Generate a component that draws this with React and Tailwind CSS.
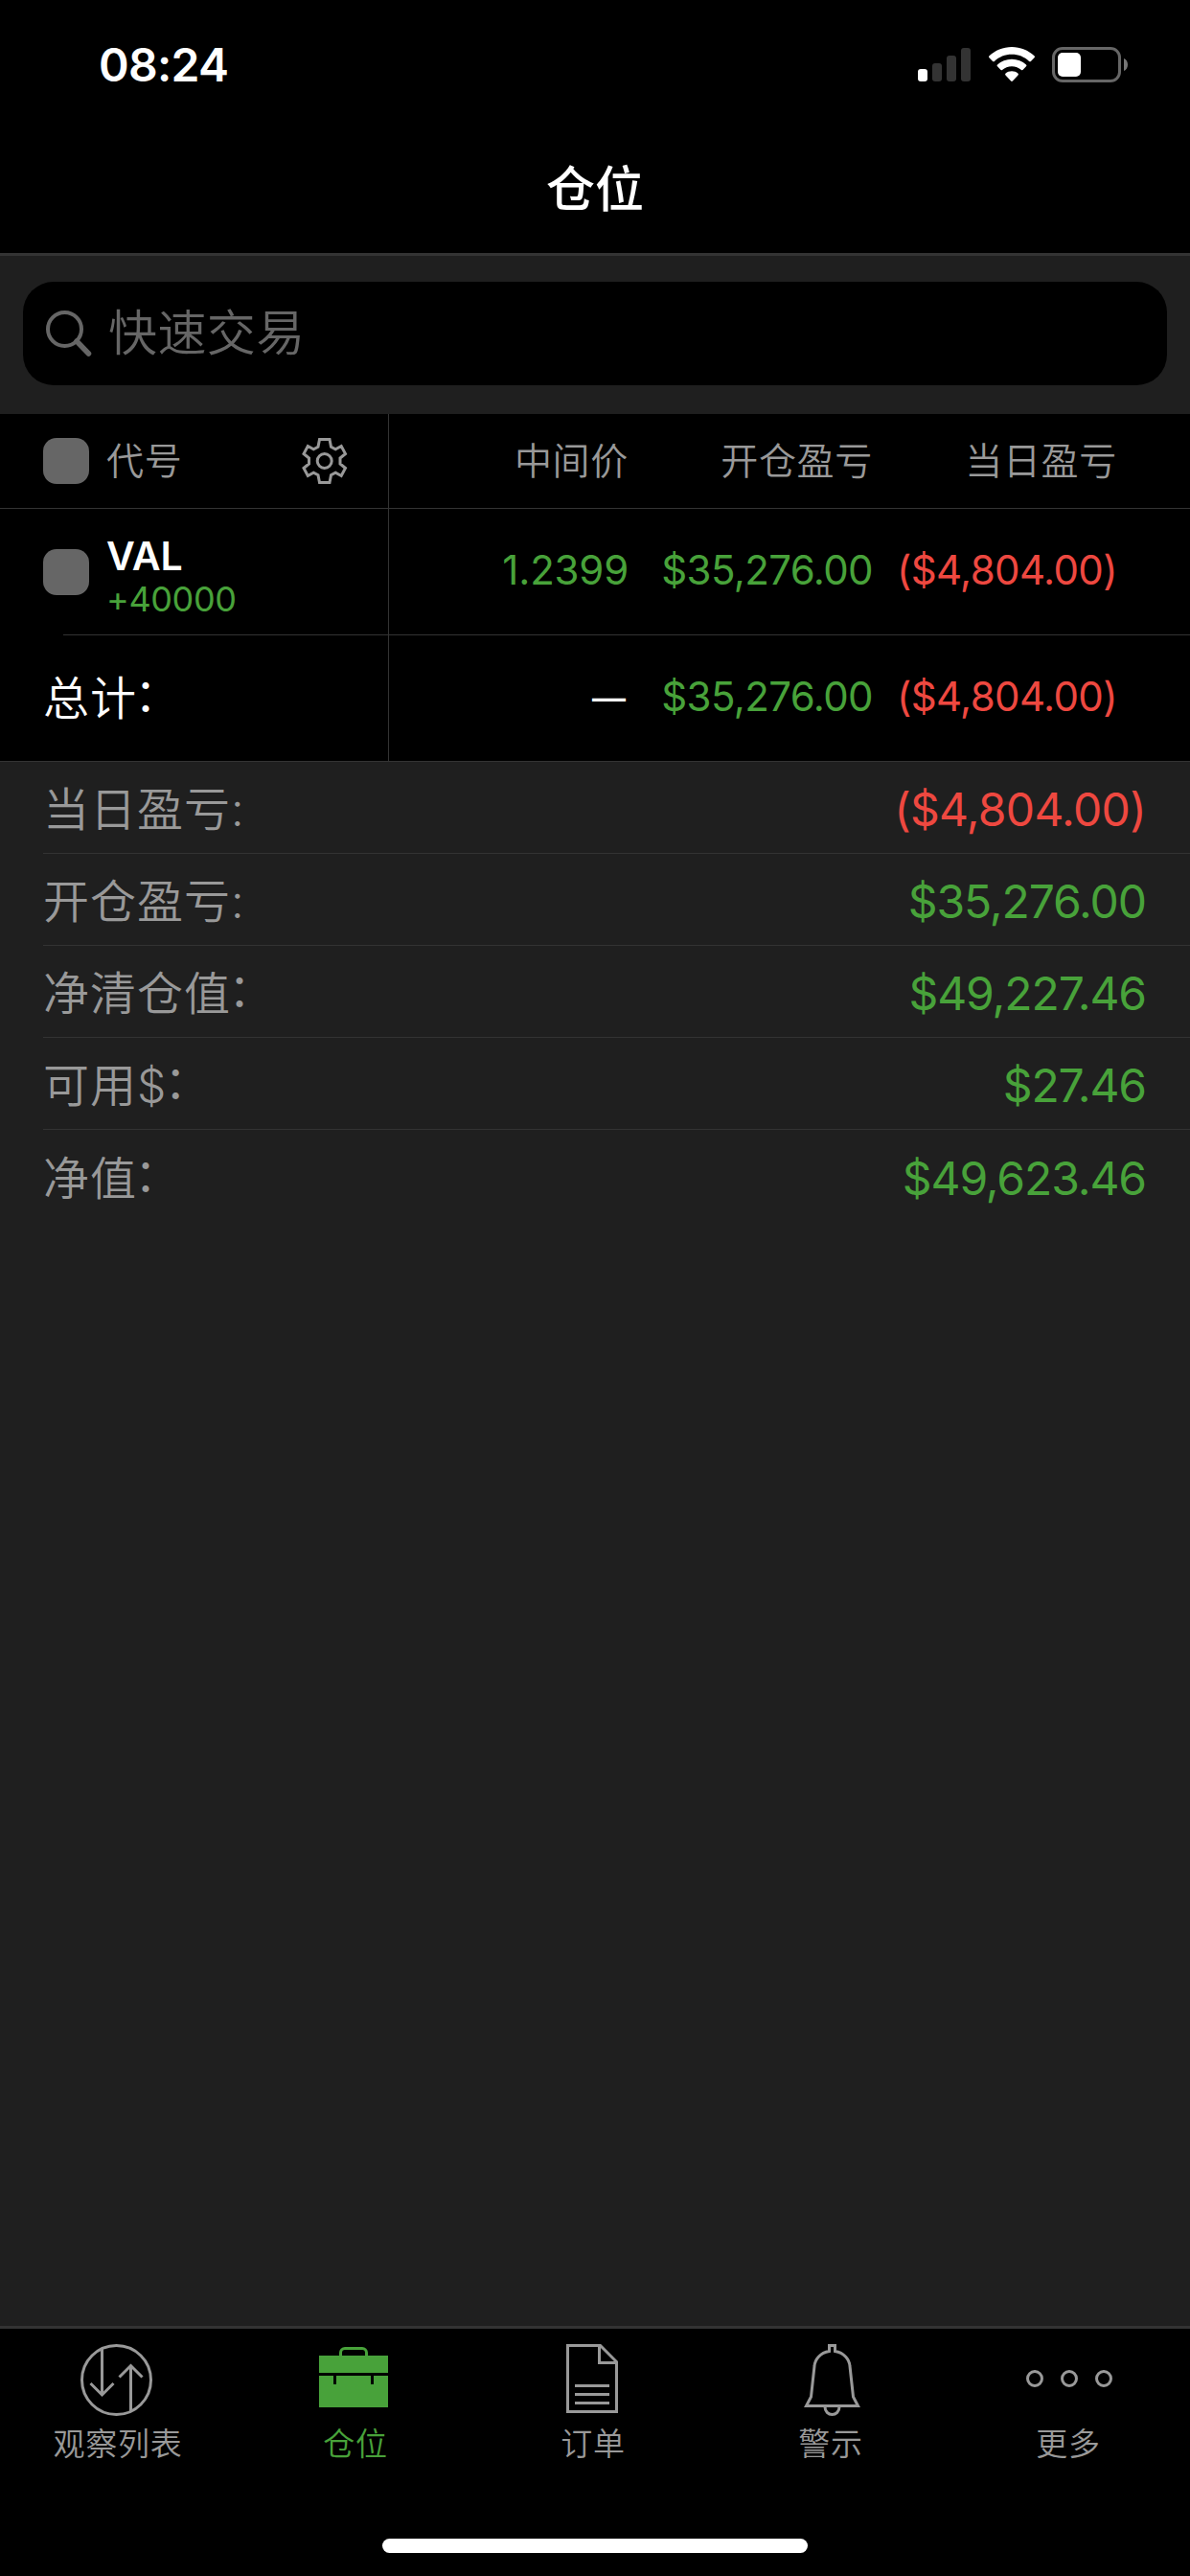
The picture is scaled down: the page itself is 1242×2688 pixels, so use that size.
import React from 'react';

const GREEN = 'text-[#48a23a]';
const RED = 'text-[#ee4840]';

const position = {
  symbol: 'VAL',
  quantity: '+40000',
  mid: '1.2399',
  openPnl: '$35,276.00',
  dayPnl: '($4,804.00)',
};

const summary = [
  { label: '当日盈亏:', value: '($4,804.00)', color: `tracking-[-0.7px] ${RED}` },
  { label: '开仓盈亏:', value: '$35,276.00', color: `tracking-[-1.1px] ${GREEN}` },
  { label: '净清仓值', wideColon: true, value: '$49,227.46', color: `tracking-[-1.1px] ${GREEN}` },
  { label: '可用$', wideColon: true, value: '$27.46', color: `tracking-[-1.1px] ${GREEN}` },
  { label: '净值', wideColon: true, value: '$49,623.46', color: `tracking-[-1.1px] ${GREEN}` },
];

const StatusBar = () => (
  <div className="h-[132px] flex justify-between pl-[103px] pr-[65px] pt-[38px] shrink-0">
    <span className="text-[48px] leading-[60px] font-semibold tracking-[-0.7px]">08:24</span>
    <div className="flex items-start pt-[11px]">
      <svg width="56" height="37" viewBox="0 0 56 37">
        <rect x="0" y="23" width="10" height="13" rx="3" fill="#fff" />
        <rect x="15" y="17" width="10" height="19" rx="3" fill="#333" />
        <rect x="30" y="9" width="10" height="27" rx="3" fill="#333" />
        <rect x="45" y="1" width="10" height="35" rx="3" fill="#333" />
      </svg>
      <svg className="ml-[18px]" width="48" height="37" viewBox="0 0 48 37" fill="#fff">
        <path d="M24 0C15 0 6.600 3.500.5 9.300a1.300 1.300 0 0 0 0 1.900l3.600 3.700a1.300 1.300 0 0 0 1.800 0C10.700 10.400 17 7.800 24 7.800s13.300 2.600 18.100 7.100a1.300 1.300 0 0 0 1.800 0l3.600-3.700a1.300 1.300 0 0 0 0-1.900C41.400 3.500 33 0 24 0Z" />
        <path d="M24 12.700c-5.800 0-11 2.200-15 5.700a1.300 1.300 0 0 0 0 1.900l3.300 3.500a1.300 1.300 0 0 0 1.700.1c2.700-2.300 6.200-3.700 10-3.700s7.300 1.400 10 3.700a1.300 1.300 0 0 0 1.700-.1l3.300-3.500a1.300 1.300 0 0 0 0-1.900c-4-3.500-9.200-5.700-15-5.700Z" />
        <path d="M24 25.300c-2.500 0-4.700.8-6.400 2.200a1.300 1.300 0 0 0-.1 1.900l5.600 6.200a1.300 1.300 0 0 0 1.800 0l5.600-6.200a1.300 1.300 0 0 0-.1-1.900C28.700 26.100 26.500 25.300 24 25.300Z" />
      </svg>
      <svg className="ml-[18px]" width="79" height="37" viewBox="0 0 79 37">
        <rect x="1.500" y="1.500" width="69" height="34" rx="9.500" fill="none" stroke="#666" strokeWidth="3" />
        <rect x="6" y="6" width="24" height="25" rx="5" fill="#fff" />
        <path d="M75 12c2.600 1.200 4 3.600 4 6.500s-1.400 5.300-4 6.500Z" fill="#777" />
      </svg>
    </div>
  </div>
);

const Checkbox = () => <div className="w-[48px] h-[48px] rounded-[14px] bg-[#666] shrink-0" />;

const GearIcon = () => (
  <svg width="48" height="48" viewBox="0 0 48 48" fill="none" stroke="#999" strokeWidth="3">
    <path d="M18.500 1.500h10.500l1.500 7.800 4.700 2.500 6-3.300 4.300 8-5.500 4.500v6l5.500 4.500-4.300 8-6-3.300-4.700 2.500-1.500 7.800H18.500l-1.500-7.800-4.700-2.500-6 3.300-4.300-8 5.500-4.500v-6l-5.500-4.500 4.300-8 6 3.300 4.700-2.500Z" />
    <circle cx="23.700" cy="24" r="7.500" />
  </svg>
);

const SearchBar = () => (
  <div className="h-[165px] px-[24px] pt-[27px] shrink-0">
    <div className="h-[108px] rounded-[32px] bg-black flex items-center pl-[23px]">
      <svg width="50" height="50" viewBox="0 0 50 50" fill="none" stroke="#666">
        <circle cx="20.500" cy="20.500" r="17.500" strokeWidth="4" />
        <path d="M33 33l12.500 13" strokeWidth="5.500" strokeLinecap="round" />
      </svg>
      <span className="ml-[16px] text-[51px] leading-[74px] tracking-[0.4px] font-[350] text-[#666]">快速交易</span>
    </div>
  </div>
);

// Full-width colon, lifted to the middle of the line
const WideColon = () => <span className="relative -top-[4px] -left-[3px]">：</span>;

// Right-aligned quote columns shared by the header, position and total rows
const QuoteCells = ({ children }) => (
  <div className="flex-1 border-l border-[#333] grid grid-cols-[250px_255px_255px] items-center text-right">
    {children}
  </div>
);

const PositionTable = () => (
  <div className="bg-black shrink-0">
    <div className="h-[99px] flex border-b border-[#333] text-[39px] tracking-[0.7px] font-[350] text-[#999]">
      <div className="w-[405px] flex items-center pl-[45px]">
        <Checkbox />
        <span className="ml-[18px] flex-1">代号</span>
        <span className="mr-[42px]"><GearIcon /></span>
      </div>
      <QuoteCells>
        <span>中间价</span>
        <span>开仓盈亏</span>
        <span>当日盈亏</span>
      </QuoteCells>
    </div>

    <div className="h-[131px] flex text-[42px]">
      <div className="w-[405px] flex items-center pl-[45px]">
        <Checkbox />
        <div className="ml-[18px] pt-[11px]">
          <div className="text-[41px] leading-[46px] font-semibold">{position.symbol}</div>
          <div className={`text-[36px] leading-[44px] tracking-[-0.4px] ${GREEN}`}>{position.quantity}</div>
        </div>
      </div>
      <QuoteCells>
        <span className={`pb-[4px] tracking-[-0.2px] ${GREEN}`}>{position.mid}</span>
        <span className={`pb-[4px] tracking-[-0.6px] ${GREEN}`}>{position.openPnl}</span>
        <span className={`pb-[4px] tracking-[-0.6px] ${RED}`}>{position.dayPnl}</span>
      </QuoteCells>
    </div>
    <div className="ml-[66px] h-px bg-[#333]" />

    <div className="h-[132px] flex border-b border-[#333] text-[42px]">
      <div className="w-[405px] flex items-center pl-[45px] text-[48px] tracking-[1px] font-[350]">
        <span>总计<WideColon /></span>
      </div>
      <QuoteCells>
        <span className="pr-[3px] text-[35px] font-medium">—</span>
        <span className={`pb-[4px] tracking-[-0.6px] ${GREEN}`}>{position.openPnl}</span>
        <span className={`pb-[4px] tracking-[-0.6px] ${RED}`}>{position.dayPnl}</span>
      </QuoteCells>
    </div>
  </div>
);

const Summary = () => (
  <div className="flex-1 pl-[45px]">
    {summary.map((row) => (
      <div
        key={row.label}
        className="h-[96px] flex items-center justify-between pt-[5px] pr-[46px] text-[48px] border-b border-[#333] last:border-b-0"
      >
        <span className="tracking-[1px] font-[350] text-[#999]">
          {row.label}
          {row.wideColon && <WideColon />}
        </span>
        <span className={row.color}>{row.value}</span>
      </div>
    ))}
  </div>
);

const icons = {
  watchlist: (
    <>
      <circle cx="48.500" cy="39.500" r="36" />
      <path d="M33.500 6v48M21.500 43l12 12 12-12M63.500 72V25M51.500 36.500l12-12 12 12" />
    </>
  ),
  positions: (
    <>
      <path d="M34.500 15v-4a4.500 4.500 0 0 1 4.500-4.500h18a4.500 4.500 0 0 1 4.500 4.500v4" />
      <path d="M12 14h72v18H12zM12 35h15v9h3v-9h36v9h3v-9h15v33H12z" fill="currentColor" stroke="none" />
    </>
  ),
  orders: (
    <path d="M23.500 3.500h34l17 17v52h-51ZM56.500 3.500v18h18M31 45.500h36M31 54.500h36M31 63.500h36" />
  ),
  alerts: (
    <>
      <path d="M48.500 9.500v-6h6v6C64 11 69.500 18 70 25l3.500 32 5 9.500h-54l5-9.500L33 25c.500-7 6-14 15.500-15.500Z" />
      <path d="M44 67.500c0 5 3.500 8 7.500 8s7.500-3 7.500-8" />
    </>
  ),
  more: (
    <>
      <circle cx="15" cy="38" r="7.500" />
      <circle cx="51" cy="38" r="7.500" />
      <circle cx="87" cy="38" r="7.500" />
    </>
  ),
};

const tabs = [
  { id: 'watchlist', label: '观察列表' },
  { id: 'positions', label: '仓位' },
  { id: 'orders', label: '订单' },
  { id: 'alerts', label: '警示' },
  { id: 'more', label: '更多' },
];

const TabBar = ({ active }) => (
  <div className="h-[261px] border-t-[3px] border-[#333] bg-black flex flex-col shrink-0">
    <div className="-ml-[2px] grid grid-cols-[repeat(5,248px)] pt-[14px]">
      {tabs.map((tab) => (
        <button
          key={tab.id}
          className={`flex flex-col items-center ${tab.id === active ? GREEN : 'text-[#999]'}`}
        >
          <svg width="98" height="80" viewBox="0 0 98 80" fill="none" stroke="currentColor" strokeWidth="3">
            {icons[tab.id]}
          </svg>
          <span className="pl-[2px] pt-[1px] text-[33px] leading-[50px] tracking-[0.7px] font-[350]">{tab.label}</span>
        </button>
      ))}
    </div>
    <div className="mt-auto mb-[24px] mx-auto w-[444px] h-[15px] rounded-full bg-white" />
  </div>
);

export default function App() {
  return (
    <div className="w-[1242px] h-[2688px] flex flex-col bg-[#1f1f1f] text-white overflow-hidden font-['Inter','Noto_Sans_CJK_SC',sans-serif]">
      <div className="h-[267px] bg-black border-b-[3px] border-[#333] shrink-0">
        <StatusBar />
        <h1 className="pt-[29px] text-center text-[51px] leading-[74px] font-medium">仓位</h1>
      </div>
      <SearchBar />
      <PositionTable />
      <Summary />
      <TabBar active="positions" />
    </div>
  );
}
